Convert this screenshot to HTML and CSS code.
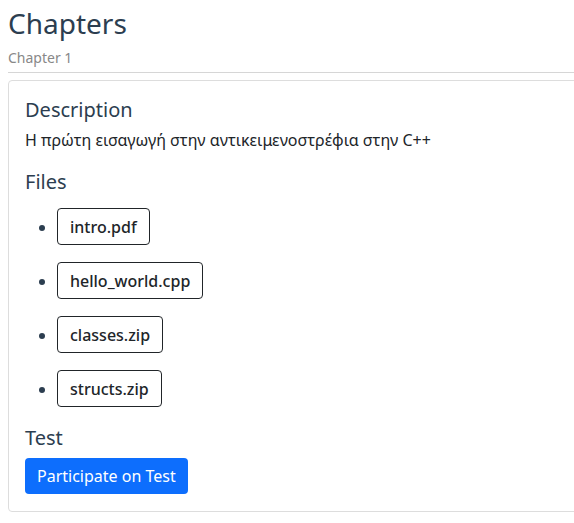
FILE: index.html
```html
<!DOCTYPE html>
<html>
<head>
<meta charset="utf-8">
<link rel="stylesheet" href="styles.css">
</head>
<body>
<div class="page">
  <h1 class="title">Chapters</h1>
  <div class="subtitle">Chapter 1</div>
  <hr class="rule">
  <div class="card">
    <h2 class="section">Description</h2>
    <p class="desc">Η πρώτη εισαγωγή στην αντικειμενοστρέφια στην C++</p>
    <h2 class="section">Files</h2>
    <ul class="files">
      <li><span class="file-btn">intro.pdf</span></li>
      <li><span class="file-btn">hello_world.cpp</span></li>
      <li><span class="file-btn">classes.zip</span></li>
      <li><span class="file-btn">structs.zip</span></li>
    </ul>
    <h2 class="section">Test</h2>
    <span class="test-btn">Participate on Test</span>
  </div>
</div>
</body>
</html>
```
FILE: styles.css
```css
body {
  margin: 8px 0 8px 8px;
  overflow: hidden;
  font-family: "Noto Sans", sans-serif;
  color: #212529;
}
.page { margin-right: -40px; }
.title {
  margin: 0;
  font-size: 28px;
  font-weight: 400;
  line-height: 30px;
  color: #2c3e50;
}
.subtitle {
  margin-top: 10px;
  font-size: 14px;
  line-height: 20px;
  color: #888;
}
.rule {
  margin: 4px 0 7px;
  border: 0;
  border-top: 1px solid #d6d6d6;
}
.card {
  border: 1px solid #ddd;
  border-radius: 4px;
  padding: 16px 16px 17px 16px;
}
.section {
  margin: 0;
  font-size: 20px;
  font-weight: 400;
  line-height: 26px;
  color: #2c3e50;
}
.desc {
  margin: 6px 0 18px;
  font-size: 16px;
  line-height: 22px;
}
.files {
  margin: 13px 0 1px;
  padding-left: 32px;
}
.files li {
  height: 54px;
  color: #2c3e50;
}
.file-btn {
  display: inline-block;
  border: 1px solid #212529;
  border-radius: 4px;
  padding: 7px 12px 6px;
  font-size: 16px;
  font-weight: 500;
  line-height: 22px;
  color: #212529;
}
.test-btn {
  display: inline-block;
  margin-top: 7px;
  background: #0d6efd;
  color: #fff;
  border-radius: 4px;
  padding: 6px 12px;
  font-size: 16px;
  line-height: 24px;
}
```
